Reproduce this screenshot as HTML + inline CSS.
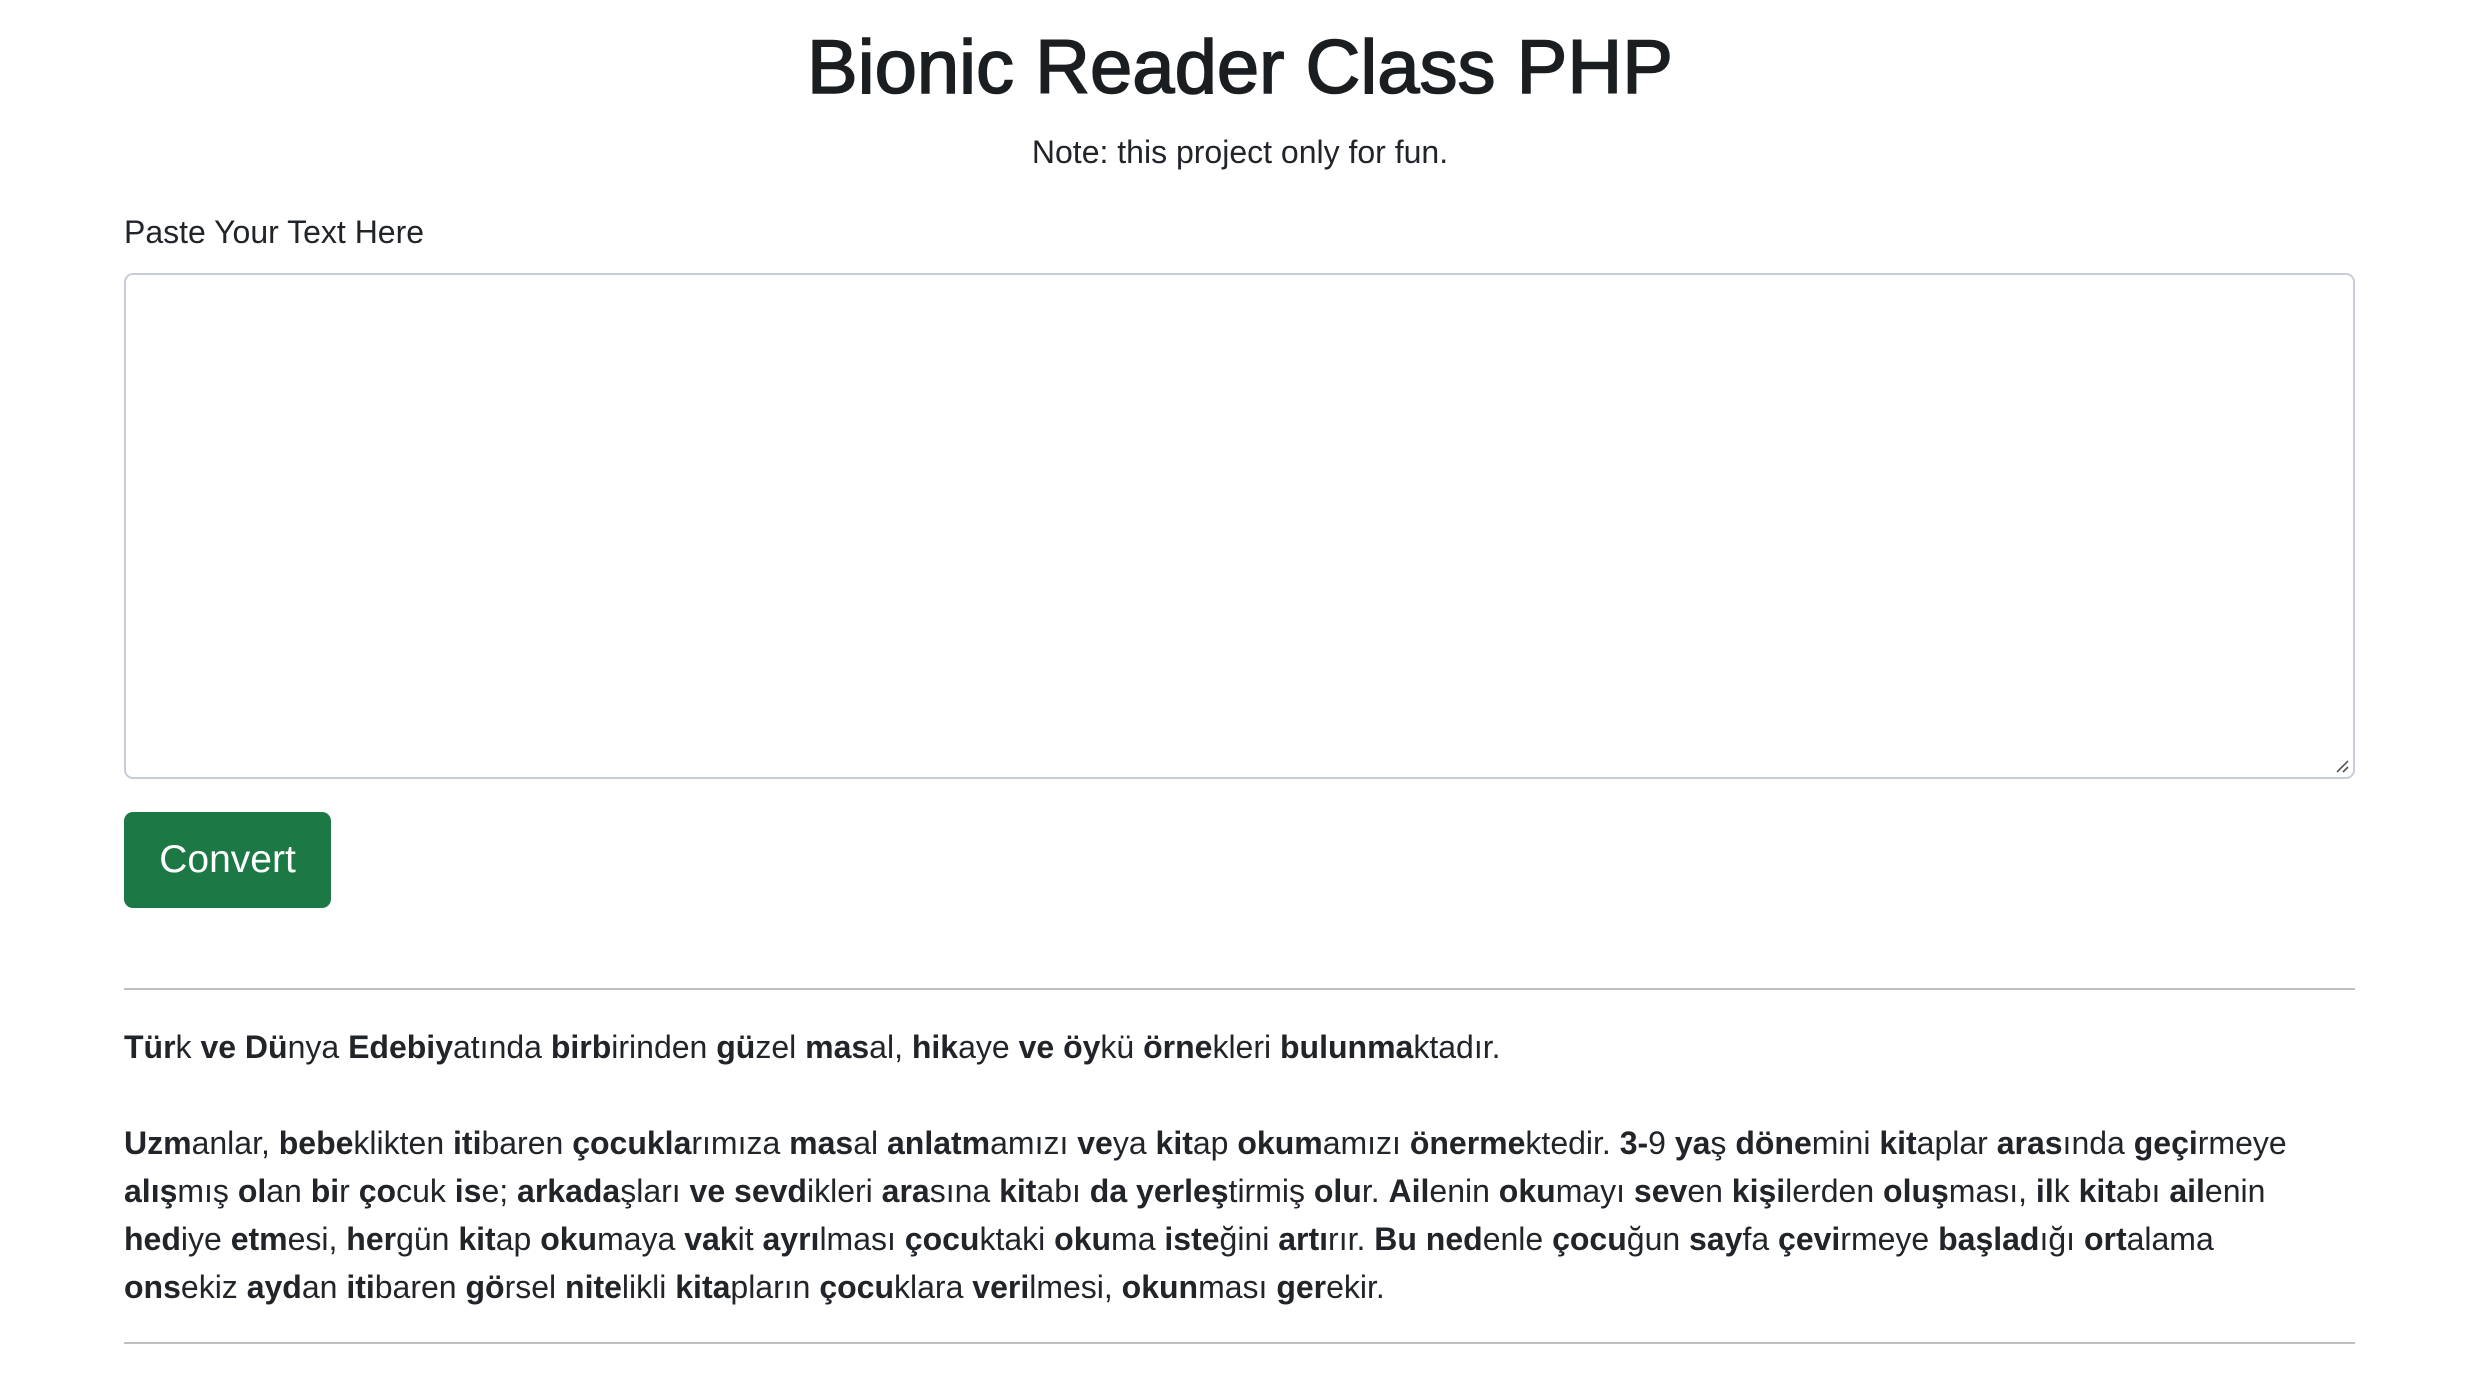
<!DOCTYPE html>
<html><head><meta charset="utf-8">
<style>
html,body{margin:0;padding:0;background:#fff;width:2480px;height:1390px;overflow:hidden;}
body{font-family:"Liberation Sans",Arial,sans-serif;color:#212529;position:relative;}
.abs{position:absolute;}
h1{position:absolute;left:0;width:2480px;top:29px;margin:0;text-align:center;font-size:76px;line-height:78px;font-weight:400;color:#1b1e21;-webkit-text-stroke:1.6px #1b1e21;}
.note{left:0;width:2480px;top:128px;text-align:center;font-size:32px;line-height:48px;}
.label{left:124px;top:208px;font-size:32px;line-height:48px;}
.ta{left:124px;top:273px;width:2231px;height:506px;border:2px solid #c8cdd5;border-radius:9px;box-sizing:border-box;}
.grip{right:4px;bottom:4px;width:14px;height:14px;}
.btn{left:124px;top:812px;width:207px;height:96px;background:#1c7945;border-radius:9px;color:#fff;font-size:39px;display:flex;align-items:center;justify-content:center;}
.hr{left:124px;width:2231px;height:2px;background:#c0c0c0;}
.txt{left:124px;top:1023px;font-size:32px;line-height:48px;white-space:nowrap;}
b{font-weight:700;}
</style></head><body>
<h1>Bionic Reader Class PHP</h1>
<div class="abs note">Note: this project only for fun.</div>
<div class="abs label">Paste Your Text Here</div>
<div class="abs ta"><svg class="abs grip" viewBox="0 0 14 14"><path d="M2 13L13 2M8 13L13 8" stroke="#555" stroke-width="1.6"/></svg></div>
<div class="abs btn">Convert</div>
<div class="abs hr" style="top:988px"></div>
<div class="abs txt"><b>Tür</b>k <b>ve</b> <b>Dü</b>nya <b>Edebiy</b>atında <b>birb</b>irinden <b>gü</b>zel <b>mas</b>al, <b>hik</b>aye <b>ve</b> <b>öy</b>kü <b>örne</b>kleri <b>bulunma</b>ktadır.<br><br><b>Uzm</b>anlar, <b>bebe</b>klikten <b>iti</b>baren <b>çocukla</b>rımıza <b>mas</b>al <b>anlatm</b>amızı <b>ve</b>ya <b>kit</b>ap <b>okum</b>amızı <b>önerme</b>ktedir. <b>3-</b>9 <b>ya</b>ş <b>döne</b>mini <b>kit</b>aplar <b>aras</b>ında <b>geçi</b>rmeye<br><b>alış</b>mış <b>ol</b>an <b>bi</b>r <b>ço</b>cuk <b>is</b>e; <b>arkada</b>şları <b>ve</b> <b>sevd</b>ikleri <b>ara</b>sına <b>kit</b>abı <b>da</b> <b>yerleş</b>tirmiş <b>olu</b>r. <b>Ail</b>enin <b>oku</b>mayı <b>sev</b>en <b>kişi</b>lerden <b>oluş</b>ması, <b>il</b>k <b>kit</b>abı <b>ail</b>enin<br><b>hed</b>iye <b>etm</b>esi, <b>her</b>gün <b>kit</b>ap <b>oku</b>maya <b>vak</b>it <b>ayrı</b>lması <b>çocu</b>ktaki <b>oku</b>ma <b>iste</b>ğini <b>artı</b>rır. <b>Bu</b> <b>ned</b>enle <b>çocu</b>ğun <b>say</b>fa <b>çevi</b>rmeye <b>başlad</b>ığı <b>ort</b>alama<br><b>ons</b>ekiz <b>ayd</b>an <b>iti</b>baren <b>gö</b>rsel <b>nite</b>likli <b>kita</b>pların <b>çocu</b>klara <b>veri</b>lmesi, <b>okun</b>ması <b>ger</b>ekir.</div>
<div class="abs hr" style="top:1342px"></div>
</body></html>
